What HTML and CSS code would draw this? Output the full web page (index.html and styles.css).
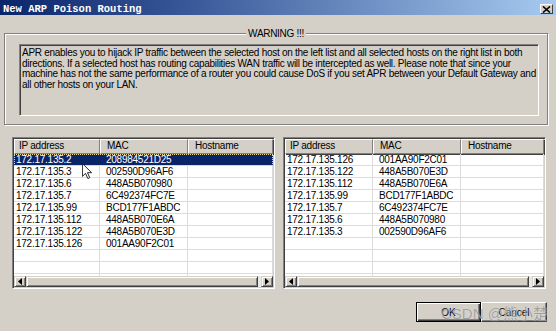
FILE: index.html
```html
<!DOCTYPE html>
<html>
<head>
<meta charset="utf-8">
<link rel="stylesheet" href="styles.css">
</head>
<body>
<div class="window">
  <div class="titlebar">
    <span class="title">New ARP Poison Routing</span>
    <span class="close"><svg width="9" height="7" viewBox="0 0 9 7"><path d="M1 0.5 L8 6.5 M8 0.5 L1 6.5" stroke="#000" stroke-width="1.6"/></svg></span>
  </div>
  <div class="content">
    <div class="group">
      <div class="group-title">WARNING !!!</div>
      <div class="textbox">
        <p class="warn">APR enables you to hijack IP traffic between the selected host on the left list and all selected hosts on the right list in both<br>directions. If a selected host has routing capabilities WAN traffic will be intercepted as well. Please note that since your<br>machine has not the same performance of a router you could cause DoS if you set APR between your Default Gateway and<br>all other hosts on your LAN.</p>
      </div>
    </div>
    <div class="lists">
      <div class="list list-left">
        <div class="list-head">
          <div class="hcell">IP address</div><div class="hcell">MAC</div><div class="hcell">Hostname</div>
        </div>
        <div class="rows">
          <div class="row sel"><span class="cell first">172.17.135.2</span><span class="cell">208984521D25</span><span class="cell"></span></div>
          <div class="row"><span class="cell first">172.17.135.3</span><span class="cell">002590D96AF6</span><span class="cell"></span></div>
          <div class="row"><span class="cell first">172.17.135.6</span><span class="cell">448A5B070980</span><span class="cell"></span></div>
          <div class="row"><span class="cell first">172.17.135.7</span><span class="cell">6C492374FC7E</span><span class="cell"></span></div>
          <div class="row"><span class="cell first">172.17.135.99</span><span class="cell">BCD177F1ABDC</span><span class="cell"></span></div>
          <div class="row"><span class="cell first">172.17.135.112</span><span class="cell">448A5B070E6A</span><span class="cell"></span></div>
          <div class="row"><span class="cell first">172.17.135.122</span><span class="cell">448A5B070E3D</span><span class="cell"></span></div>
          <div class="row"><span class="cell first">172.17.135.126</span><span class="cell">001AA90F2C01</span><span class="cell"></span></div>
          <div class="row"><span class="cell first"></span><span class="cell"></span><span class="cell"></span></div>
          <div class="row"><span class="cell first"></span><span class="cell"></span><span class="cell"></span></div>
          <div class="row"><span class="cell first"></span><span class="cell"></span><span class="cell"></span></div>
        </div>
        <div class="hscroll">
          <span class="sbtn"><svg width="4" height="7" viewBox="0 0 4 7"><path d="M4 0 L0 3.5 L4 7 Z" fill="#000"/></svg></span>
          <span class="thumb"></span>
          <span class="sbtn"><svg width="4" height="7" viewBox="0 0 4 7"><path d="M0 0 L4 3.5 L0 7 Z" fill="#000"/></svg></span>
        </div>
      </div>
      <div class="list list-right">
        <div class="list-head">
          <div class="hcell">IP address</div><div class="hcell">MAC</div><div class="hcell">Hostname</div>
        </div>
        <div class="rows">
          <div class="row"><span class="cell first">172.17.135.126</span><span class="cell">001AA90F2C01</span><span class="cell"></span></div>
          <div class="row"><span class="cell first">172.17.135.122</span><span class="cell">448A5B070E3D</span><span class="cell"></span></div>
          <div class="row"><span class="cell first">172.17.135.112</span><span class="cell">448A5B070E6A</span><span class="cell"></span></div>
          <div class="row"><span class="cell first">172.17.135.99</span><span class="cell">BCD177F1ABDC</span><span class="cell"></span></div>
          <div class="row"><span class="cell first">172.17.135.7</span><span class="cell">6C492374FC7E</span><span class="cell"></span></div>
          <div class="row"><span class="cell first">172.17.135.6</span><span class="cell">448A5B070980</span><span class="cell"></span></div>
          <div class="row"><span class="cell first">172.17.135.3</span><span class="cell">002590D96AF6</span><span class="cell"></span></div>
          <div class="row"><span class="cell first"></span><span class="cell"></span><span class="cell"></span></div>
          <div class="row"><span class="cell first"></span><span class="cell"></span><span class="cell"></span></div>
          <div class="row"><span class="cell first"></span><span class="cell"></span><span class="cell"></span></div>
          <div class="row"><span class="cell first"></span><span class="cell"></span><span class="cell"></span></div>
        </div>
        <div class="hscroll">
          <span class="sbtn"><svg width="4" height="7" viewBox="0 0 4 7"><path d="M4 0 L0 3.5 L4 7 Z" fill="#000"/></svg></span>
          <span class="thumb"></span>
          <span class="sbtn"><svg width="4" height="7" viewBox="0 0 4 7"><path d="M0 0 L4 3.5 L0 7 Z" fill="#000"/></svg></span>
        </div>
      </div>
    </div>
    <div class="buttons">
      <button class="btn btn-default">OK</button>
      <button class="btn">Cancel</button>
    </div>
  </div>
  <svg class="cursor" width="10" height="16" viewBox="0 0 12 19"><path d="M0.5 0.5 L0.5 16 L4.2 12.4 L7 18.5 L9.3 17.5 L6.6 11.5 L11.5 11.5 Z" fill="#fff" stroke="#000" stroke-width="1"/></svg>
  <div class="watermark">CSDN @熊小楚</div>
</div>
</body>
</html>
```

FILE: styles.css
```css
* { box-sizing: border-box; }
html, body { margin: 0; padding: 0; }
body {
  background: #d4d0c8;
  font-family: "Liberation Sans", Arial, sans-serif;
  color: #000;
}
.window {
  position: relative;
  width: 556px;
  height: 331px;
  overflow: hidden;
  background: #d4d0c8;
}
.titlebar {
  height: 15px;
  background: linear-gradient(to right, #0a246a 0%, #3a5a9a 35%, #a6caf0 100%);
  display: flex;
  align-items: center;
  justify-content: space-between;
  padding: 3px 3px 0 3px;
}
.title {
  font-family: "Liberation Mono", monospace;
  font-weight: bold;
  font-size: 10.5px;
  color: #fff;
  line-height: 10px;
}
.close {
  width: 13px;
  height: 10px;
  background: #d4d0c8;
  border: 1px solid;
  border-color: #fff #404040 #404040 #fff;
  display: flex;
  align-items: center;
  justify-content: center;
}
.close svg { display: block; }
.content {
  padding: 0 8px 0 4px;
}
.group {
  margin-top: 18px;
  border: 1px solid #808080;
  box-shadow: inset 1px 1px 0 #fff, 1px 1px 0 #fff;
}
.group-title {
  width: max-content;
  margin: -7px auto 0;
  padding: 0 2px;
  background: #d4d0c8;
  font-size: 10px;
  letter-spacing: -0.3px;
  line-height: 13px;
  position: relative;
}
.textbox {
  margin: 4px 8px 8px 14px;
  height: 72px;
  border: 1px solid;
  border-color: #808080 #fff #fff #808080;
  box-shadow: inset 1px 1px 0 #404040, inset -1px -1px 0 #d4d0c8;
  padding: 3px 2px;
  overflow: hidden;
}
.warn {
  margin: 0;
  font-size: 10px;
  letter-spacing: -0.28px;
  line-height: 10.5px;
  white-space: nowrap;
}
.lists {
  display: flex;
  gap: 8px;
  margin: 12px 2px 0 8px;
}
.list {
  flex: 1;
  height: 152px;
  background: #fff;
  border: 1px solid;
  border-color: #808080 #fff #fff #808080;
  box-shadow: inset 1px 1px 0 #404040, inset -1px -1px 0 #d4d0c8;
  padding: 1px;
  display: flex;
  flex-direction: column;
  overflow: hidden;
}
.list-left { --c1: 86px; --c2: 88px; }
.list-right { --c1: 88px; --c2: 88px; }
.list-head, .row {
  display: grid;
  grid-template-columns: var(--c1) var(--c2) 1fr;
}
.list-head {
  height: 15px;
  flex: none;
}
.hcell {
  background: #d4d0c8;
  border: 1px solid;
  border-color: #fff #808080 #808080 #fff;
  box-shadow: 1px 1px 0 #404040;
  font-size: 10px;
  letter-spacing: -0.25px;
  line-height: 12px;
  padding-left: 4px;
  white-space: nowrap;
  overflow: hidden;
}
.hcell + .hcell { padding-left: 6px; }
.rows {
  flex: 1;
  overflow: hidden;
}
.row {
  height: 12px;
  border-bottom: 1px solid #dcdcdc;
  font-size: 10px;
  letter-spacing: -0.25px;
  line-height: 11px;
}
.cell {
  border-right: 1px solid #dcdcdc;
  padding-left: 6px;
  white-space: nowrap;
  overflow: hidden;
}
.cell.first { padding-left: 2px; }
.row.sel {
  background: #0a246a;
  color: #fff;
  outline: 1px dotted #e8d890;
  outline-offset: -1px;
}
.row.sel .cell { border-right-color: #0a246a; }
.hscroll {
  height: 11px;
  flex: none;
  display: flex;
  background: #ebe9e3;
  gap: 0;
}
.sbtn {
  width: 12px;
  flex: none;
  background: #d4d0c8;
  border: 1px solid;
  border-color: #d4d0c8 #404040 #404040 #d4d0c8;
  box-shadow: inset 1px 1px 0 #fff, inset -1px -1px 0 #808080;
  display: flex;
  align-items: center;
  justify-content: center;
}
.thumb {
  flex: 1;
  margin-right: 3px;
  background: #d4d0c8;
  border: 1px solid;
  border-color: #d4d0c8 #404040 #404040 #d4d0c8;
  box-shadow: inset 1px 1px 0 #fff, inset -1px -1px 0 #808080;
}
.buttons {
  display: flex;
  justify-content: flex-end;
  gap: 0;
  margin: 13px 1px 0 0;
}
.btn {
  width: 65px;
  height: 20px;
  margin: 0;
  padding: 0;
  background: #d4d0c8;
  font-family: "Liberation Sans", Arial, sans-serif;
  font-size: 10px;
  color: #000;
  border: 1px solid;
  border-color: #fff #404040 #404040 #fff;
  box-shadow: inset -1px -1px 0 #808080;
}
.btn + .btn { width: 66px; }
.btn-default {
  border: 1px solid #000;
  box-shadow: inset 1px 1px 0 #fff, inset -1px -1px 0 #404040, inset -2px -2px 0 #808080;
}
.cursor {
  position: absolute;
  left: 82px;
  top: 163px;
}
.watermark {
  position: absolute;
  left: 441px;
  top: 302px;
  font-family: "Liberation Sans", "Noto Sans CJK SC", sans-serif;
  font-size: 15px;
  color: rgba(110, 110, 110, 0.6);
  text-shadow: 0 0 1px rgba(255, 255, 255, 0.7);
  white-space: nowrap;
  pointer-events: none;
}
```
